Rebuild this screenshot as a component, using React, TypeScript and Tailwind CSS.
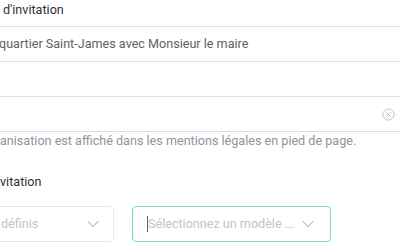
import React from 'react'

function Chevron() {
  return (
    <svg width="12" height="8" viewBox="0 0 12 8" fill="none" className="shrink-0">
      <polyline points="1,1.5 6,6.5 11,1.5" stroke="#c0c4cc" strokeWidth="1.1" strokeLinecap="round" strokeLinejoin="round" />
    </svg>
  )
}

function ClearIcon() {
  return (
    <svg width="13" height="13" viewBox="0 0 14 14" fill="none">
      <circle cx="7" cy="7" r="6" stroke="#b8bcc4" strokeWidth="1" />
      <path d="M5 5 L9 9 M9 5 L5 9" stroke="#b8bcc4" strokeWidth="1" strokeLinecap="round" />
    </svg>
  )
}

export default function App() {
  return (
    <div className="w-[400px] h-[250px] overflow-hidden bg-white font-['Roboto',sans-serif] text-[12.6px]">
      <div className="h-[26px] pl-[3px] leading-[20px] text-[#303133]">d'invitation</div>

      <div className="h-[36px] border-y border-[#dcdfe6] flex items-center text-[#606266]">
        <span className="ml-[-1px]">quartier Saint-James avec Monsieur le maire</span>
      </div>
      <div className="h-[35px] border-b border-[#dcdfe6]" />
      <div className="h-[35px] border-b border-[#dcdfe6] flex items-center justify-end pr-[5px]">
        <ClearIcon />
      </div>

      <p className="leading-[18px] text-[#909399] whitespace-nowrap">
        anisation est affiché dans les mentions légales en pied de page.
      </p>

      <div className="mt-[22px] leading-[20px] text-[#303133]">vitation</div>

      <div className="mt-[14px] flex items-center gap-[18px]">
        <div className="ml-[-40px] w-[154px] h-[36px] rounded-[4px] border border-[#e4e7ed] flex items-center justify-between pl-[40px] pr-[14px]">
          <span className="text-[#c0c4cc]">définis</span>
          <Chevron />
        </div>
        <div className="w-[199px] h-[36px] rounded-[4px] border border-[#7fd6cb] flex items-center justify-between pl-[14px] pr-[16px]">
          <span className="flex items-center text-[#c0c4cc] whitespace-nowrap">
            <span className="w-[1px] h-[16px] bg-[#606266]" />
            Sélectionnez un modèle ...
          </span>
          <Chevron />
        </div>
      </div>
    </div>
  )
}
